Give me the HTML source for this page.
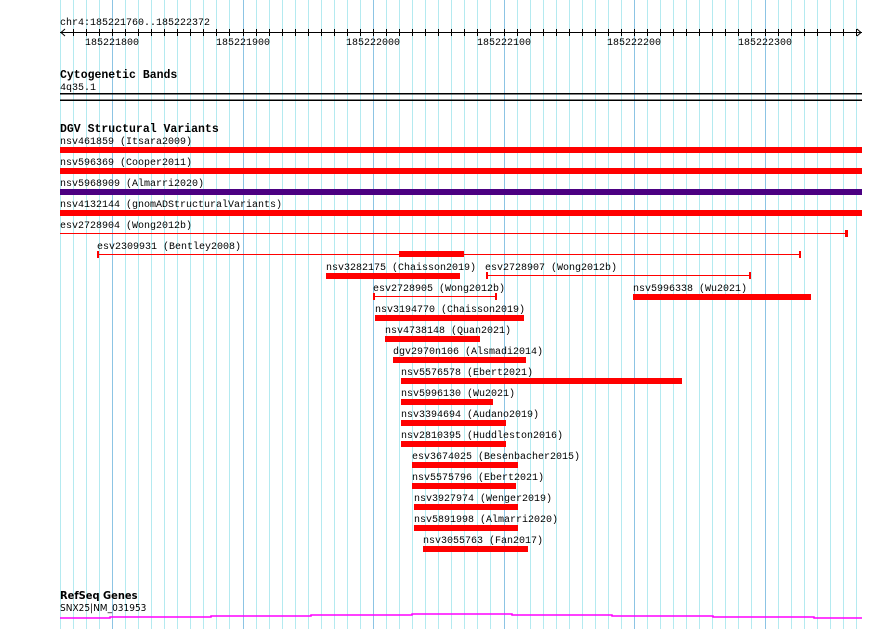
<!DOCTYPE html>
<html><head><style>
html,body{margin:0;padding:0;background:#fff;}
svg{display:block}
text{font-family:"Liberation Mono","DejaVu Sans Mono",monospace;font-size:10px;fill:#000}
.h{font-weight:bold;font-size:11.5px}
</style></head><body>
<svg width="890" height="629" xmlns="http://www.w3.org/2000/svg">
<path stroke="#b4eaf0" stroke-width="1" fill="none" d="M60.5 0V629M73.5 0V629M86.5 0V629M99.5 0V629M125.5 0V629M138.5 0V629M151.5 0V629M164.5 0V629M177.5 0V629M190.5 0V629M203.5 0V629M216.5 0V629M229.5 0V629M256.5 0V629M269.5 0V629M282.5 0V629M295.5 0V629M308.5 0V629M321.5 0V629M334.5 0V629M347.5 0V629M360.5 0V629M386.5 0V629M399.5 0V629M412.5 0V629M425.5 0V629M438.5 0V629M451.5 0V629M464.5 0V629M477.5 0V629M490.5 0V629M517.5 0V629M530.5 0V629M543.5 0V629M556.5 0V629M569.5 0V629M582.5 0V629M595.5 0V629M608.5 0V629M621.5 0V629M647.5 0V629M660.5 0V629M673.5 0V629M686.5 0V629M699.5 0V629M712.5 0V629M725.5 0V629M738.5 0V629M751.5 0V629M778.5 0V629M791.5 0V629M804.5 0V629M817.5 0V629M830.5 0V629M843.5 0V629M856.5 0V629"/>
<path stroke="#8cc4e4" stroke-width="1" fill="none" d="M112.5 0V629M243.5 0V629M373.5 0V629M504.5 0V629M634.5 0V629M765.5 0V629"/>
<path stroke="#000" stroke-width="1" fill="none" d="M73.5 29V36M86.5 29V36M99.5 29V36M112.5 29V36M125.5 29V36M138.5 29V36M151.5 29V36M164.5 29V36M177.5 29V36M190.5 29V36M203.5 29V36M216.5 29V36M229.5 29V36M243.5 29V36M256.5 29V36M269.5 29V36M282.5 29V36M295.5 29V36M308.5 29V36M321.5 29V36M334.5 29V36M347.5 29V36M360.5 29V36M373.5 29V36M386.5 29V36M399.5 29V36M412.5 29V36M425.5 29V36M438.5 29V36M451.5 29V36M464.5 29V36M477.5 29V36M490.5 29V36M504.5 29V36M517.5 29V36M530.5 29V36M543.5 29V36M556.5 29V36M569.5 29V36M582.5 29V36M595.5 29V36M608.5 29V36M621.5 29V36M634.5 29V36M647.5 29V36M660.5 29V36M673.5 29V36M686.5 29V36M699.5 29V36M712.5 29V36M725.5 29V36M738.5 29V36M751.5 29V36M765.5 29V36M778.5 29V36M791.5 29V36M804.5 29V36M817.5 29V36M830.5 29V36M843.5 29V36M856.5 29V36"/>
<text x="60" y="25">chr4:185221760..185222372</text>
<line x1="60" y1="32.5" x2="862" y2="32.5" stroke="#000"/>
<polyline points="65,29 61,32.5 65,36" fill="none" stroke="#000"/>
<polyline points="857,29 861,32.5 857,36" fill="none" stroke="#000"/>
<g text-anchor="middle">
<text x="112" y="45">185221800</text><text x="243" y="45">185221900</text>
<text x="373" y="45">185222000</text><text x="504" y="45">185222100</text>
<text x="634" y="45">185222200</text><text x="765" y="45">185222300</text>
</g>
<text class="h" x="60" y="78">Cytogenetic Bands</text>
<text x="60" y="90">4q35.1</text>
<rect x="60" y="93" width="802" height="1.5" fill="#000"/>
<rect x="60" y="99.5" width="802" height="1.5" fill="#000"/>
<text class="h" x="60" y="132">DGV Structural Variants</text>
<g fill="#f00">
<rect x="60" y="147" width="802" height="6"/>
<rect x="60" y="168" width="802" height="6"/>
<rect x="60" y="189" width="802" height="6" fill="#4b0082"/>
<rect x="60" y="210" width="802" height="6"/>
<rect x="60" y="233" width="786" height="1"/><rect x="845" y="230" width="3" height="7"/>
<rect x="97" y="254" width="703" height="1"/><rect x="97" y="251" width="2" height="7"/><rect x="799" y="251" width="2" height="7"/>
<rect x="399" y="251" width="65" height="6"/>
<rect x="326" y="273" width="134" height="6"/>
<rect x="486" y="275" width="264" height="1"/><rect x="486" y="272" width="2" height="7"/><rect x="749" y="272" width="2" height="7"/>
<rect x="633" y="294" width="178" height="6"/>
<rect x="373" y="296" width="123" height="1"/><rect x="373" y="293" width="2" height="7"/><rect x="495" y="293" width="2" height="7"/>
<rect x="375" y="315" width="149" height="6"/>
<rect x="385" y="336" width="95" height="6"/>
<rect x="393" y="357" width="133" height="6"/>
<rect x="401" y="378" width="281" height="6"/>
<rect x="401" y="399" width="92" height="6"/>
<rect x="401" y="420" width="105" height="6"/>
<rect x="401" y="441" width="105" height="6"/>
<rect x="412" y="462" width="106" height="6"/>
<rect x="412" y="483" width="104" height="6"/>
<rect x="414" y="504" width="104" height="6"/>
<rect x="414" y="525" width="104" height="6"/>
<rect x="423" y="546" width="105" height="6"/>
</g>
<text x="60" y="144">nsv461859 (Itsara2009)</text>
<text x="60" y="165">nsv596369 (Cooper2011)</text>
<text x="60" y="186">nsv5968909 (Almarri2020)</text>
<text x="60" y="207">nsv4132144 (gnomADStructuralVariants)</text>
<text x="60" y="228">esv2728904 (Wong2012b)</text>
<text x="97" y="249">esv2309931 (Bentley2008)</text>
<text x="326" y="270">nsv3282175 (Chaisson2019)</text>
<text x="485" y="270">esv2728907 (Wong2012b)</text>
<text x="633" y="291">nsv5996338 (Wu2021)</text>
<text x="373" y="291">esv2728905 (Wong2012b)</text>
<text x="375" y="312">nsv3194770 (Chaisson2019)</text>
<text x="385" y="333">nsv4738148 (Quan2021)</text>
<text x="393" y="354">dgv2970n106 (Alsmadi2014)</text>
<text x="401" y="375">nsv5576578 (Ebert2021)</text>
<text x="401" y="396">nsv5996130 (Wu2021)</text>
<text x="401" y="417">nsv3394694 (Audano2019)</text>
<text x="401" y="438">nsv2810395 (Huddleston2016)</text>
<text x="412" y="459">esv3674025 (Besenbacher2015)</text>
<text x="412" y="480">nsv5575796 (Ebert2021)</text>
<text x="414" y="501">nsv3927974 (Wenger2019)</text>
<text x="414" y="522">nsv5891998 (Almarri2020)</text>
<text x="423" y="543">nsv3055763 (Fan2017)</text>
<text class="h" x="60" y="599" style="font-family:'DejaVu Sans Condensed','Liberation Sans Narrow',sans-serif;font-size:11px">RefSeq Genes</text>
<text x="60" y="611" style="font-family:'DejaVu Sans Condensed','Liberation Sans Narrow',sans-serif;font-size:10px">SNX25|NM_031953</text>
<polyline fill="none" stroke="#f0f" stroke-width="1.5" points="60,618 110,618 110,617 211,617 211,616 311,616 311,615 412,615 412,614 512,614 512,615 612,615 612,616 713,616 713,617 814,617 814,618 862,618"/>
</svg>
</body></html>
